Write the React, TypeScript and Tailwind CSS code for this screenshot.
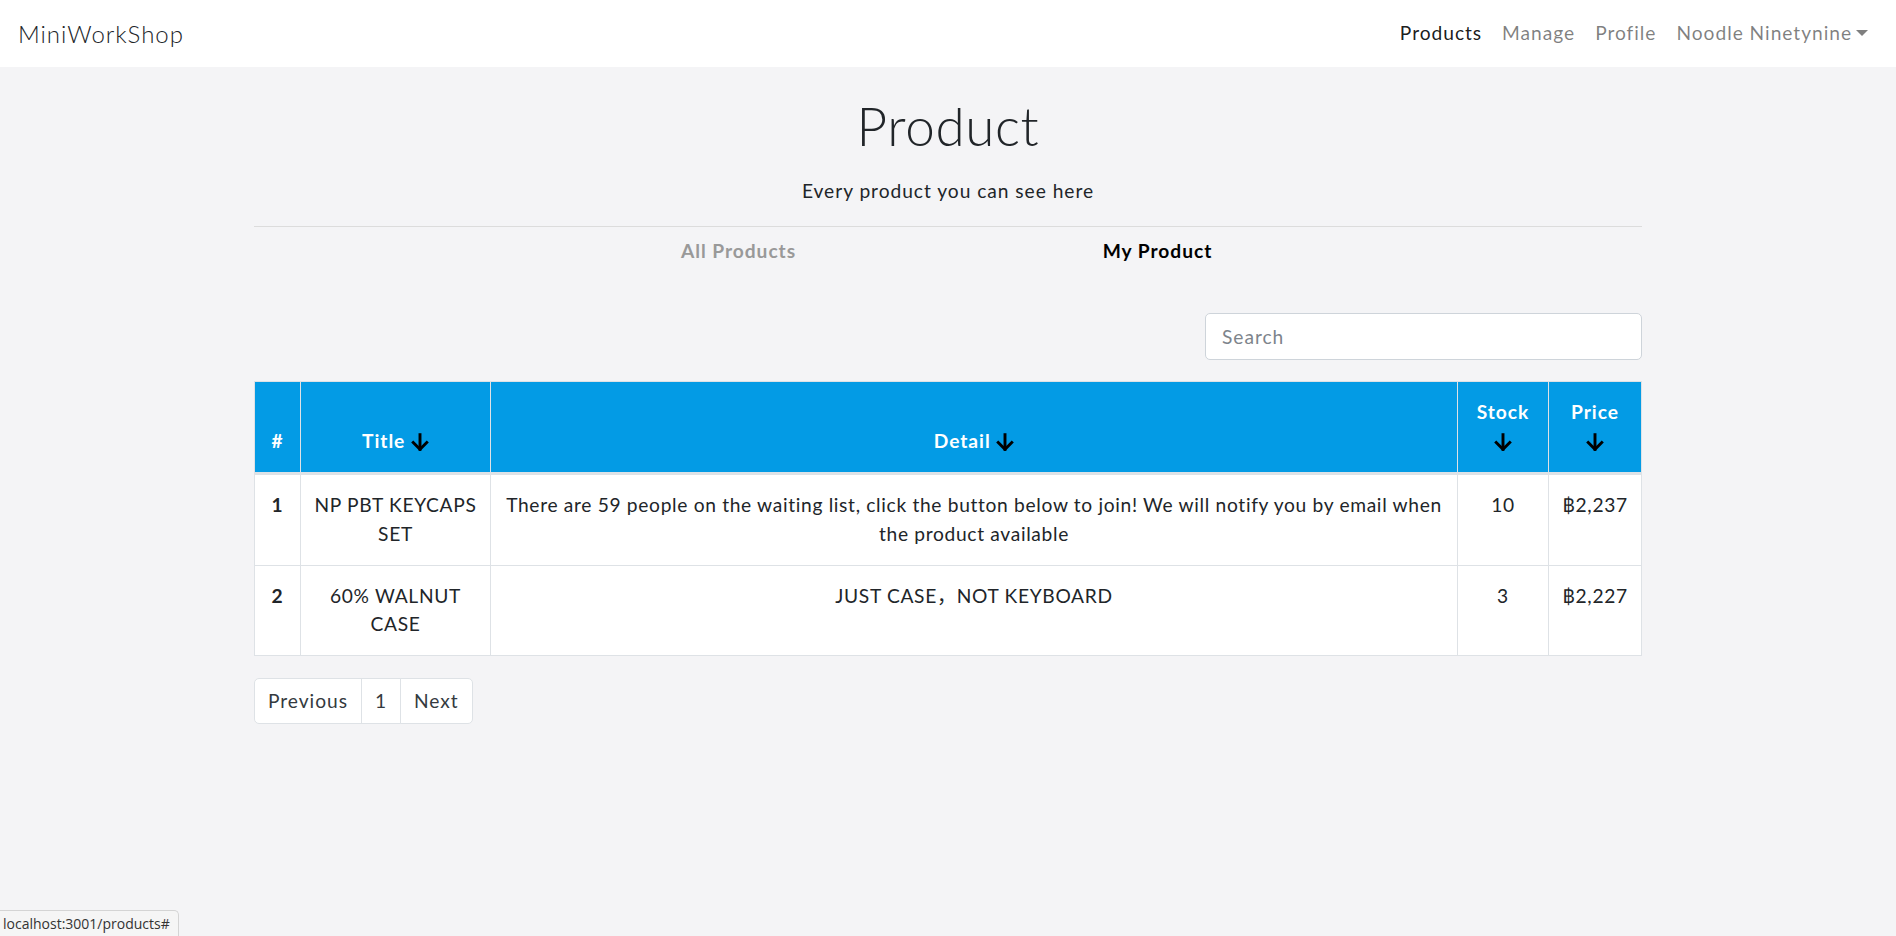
import React from "react";

type Product = {
  id: number;
  title: string;
  detail: string;
  stock: number;
  price: string;
};

const products: Product[] = [
  {
    id: 1,
    title: "NP PBT KEYCAPS SET",
    detail:
      "There are 59 people on the waiting list, click the button below to join! We will notify you by email when the product available",
    stock: 10,
    price: "฿2,237",
  },
  {
    id: 2,
    title: "60% WALNUT CASE",
    detail: "JUST CASE，NOT KEYBOARD",
    stock: 3,
    price: "฿2,227",
  },
];

function SortArrow() {
  return (
    <svg
      width="18"
      height="18"
      viewBox="4 4 16 16"
      fill="none"
      stroke="black"
      strokeWidth="2.6"
      strokeLinecap="square"
      className="inline-block align-[-3px]"
    >
      <path d="M12 5.5v13" />
      <path d="M18 12.5l-6 6-6-6" />
    </svg>
  );
}

export default function App() {
  return (
    <div className="min-h-screen bg-[#f4f4f6] text-[#212529] text-[19.2px] leading-[1.5] tracking-[0.05em] font-[Lato,'Noto_Sans_CJK_SC',sans-serif]">
      {/* Navbar */}
      <nav className="h-[67px] bg-white flex items-center justify-between px-[18px]">
        <a href="#" className="text-[24px] font-light text-[#212529] tracking-[0.04em]">
          MiniWorkShop
        </a>
        <div className="flex items-center">
          <a href="#" className="px-[10px] text-black/90">Products</a>
          <a href="#" className="px-[10px] text-black/50">Manage</a>
          <a href="#" className="px-[10px] text-black/50">Profile</a>
          <a href="#" className="pl-[10px] pr-[10px] text-black/50">
            Noodle Ninetynine
            <span className="inline-block ml-[4px] align-[4px] border-t-[6px] border-x-[6px] border-x-transparent border-b-0" />
          </a>
        </div>
      </nav>

      <div className="w-[1388px] mx-auto">
        <h1 className="mt-[27px] text-center text-[53px] leading-[1.2] font-light tracking-[0.012em]">Product</h1>
        <p className="mt-[19px] text-center">Every product you can see here</p>
        <hr className="mt-[21px] border-0 border-t border-[#dcdcdc]" />

        {/* Tabs */}
        <div className="flex justify-center">
          <a href="#" className="w-[419px] text-center py-[9.6px] font-bold text-[#999999]">
            All Products
          </a>
          <a href="#" className="w-[419px] text-center py-[9.6px] font-bold text-black">
            My Product
          </a>
        </div>

        {/* Search */}
        <div className="mt-[38px] flex justify-end">
          <input
            type="text"
            placeholder="Search"
            className="w-[437px] h-[47px] bg-white border border-[#ced4da] rounded-[5px] px-[16px] text-[19.2px] tracking-[0.05em] placeholder:text-[#7d848b] outline-none"
          />
        </div>

        {/* Table */}
        <table className="mt-[21px] w-full table-fixed border-collapse">
          <colgroup>
            <col className="w-[46px]" />
            <col className="w-[190px]" />
            <col />
            <col className="w-[91px]" />
            <col className="w-[93px]" />
          </colgroup>
          <thead>
            <tr className="bg-[#039be5] text-white">
              <th className="border border-[#dee2e6] border-b-[3px] align-bottom p-[16px] px-0 text-center font-bold">#</th>
              <th className="border border-[#dee2e6] border-b-[3px] align-bottom p-[16px] text-center font-bold">
                Title <SortArrow />
              </th>
              <th className="border border-[#dee2e6] border-b-[3px] align-bottom p-[16px] text-center font-bold">
                Detail <SortArrow />
              </th>
              <th className="border border-[#dee2e6] border-b-[3px] align-bottom p-[16px] px-0 text-center font-bold">
                Stock
                <br />
                <SortArrow />
              </th>
              <th className="border border-[#dee2e6] border-b-[3px] align-bottom p-[16px] px-0 text-center font-bold">
                Price
                <br />
                <SortArrow />
              </th>
            </tr>
          </thead>
          <tbody className="tracking-[0.035em]">
            {products.map((p) => (
              <tr key={p.id} className="bg-white">
                <td className="border border-[#dee2e6] align-top py-[16px] text-center font-bold">{p.id}</td>
                <td className="border border-[#dee2e6] align-top py-[16px] px-[10px] text-center">{p.title}</td>
                <td className="border border-[#dee2e6] align-top py-[16px] px-[10px] text-center">{p.detail}</td>
                <td className="border border-[#dee2e6] align-top py-[16px] text-center">{p.stock}</td>
                <td className="border border-[#dee2e6] align-top py-[16px] text-center">{p.price}</td>
              </tr>
            ))}
          </tbody>
        </table>

        {/* Pagination */}
        <div className="mt-[22px] flex text-[#343a40]">
          <a href="#" className="h-[46px] px-[13px] flex items-center bg-white border border-[#dee2e6] rounded-l-[5px]">
            Previous
          </a>
          <a href="#" className="h-[46px] px-[13px] flex items-center bg-white border border-[#dee2e6] -ml-px">
            1
          </a>
          <a href="#" className="h-[46px] px-[13px] flex items-center bg-white border border-[#dee2e6] -ml-px rounded-r-[5px]">
            Next
          </a>
        </div>
      </div>

      {/* Browser status bubble */}
      <div className="fixed bottom-0 left-0 h-[26px] flex items-center pl-[3px] pr-[8px] bg-[#f5f5f5] border-t border-r border-[#d4d4d4] rounded-tr-[5px] text-[14px] leading-none tracking-normal text-[#333] font-['Open_Sans',sans-serif]">
        localhost:3001/products#
      </div>
    </div>
  );
}
